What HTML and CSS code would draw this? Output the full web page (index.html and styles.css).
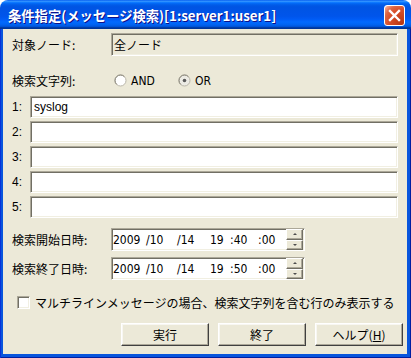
FILE: index.html
```html
<!DOCTYPE html>
<html lang="ja">
<head>
<meta charset="utf-8">
<title>条件指定</title>
<link rel="stylesheet" href="styles.css">
</head>
<body>
<div class="window">
  <div class="titlebar">
    <span class="title">条件指定(メッセージ検索)[1:server1:user1]</span>
    <span class="close">
      <svg width="19" height="19" viewBox="0 0 19 19"><path d="M5 5 L14 14 M14 5 L5 14" stroke="#fff" stroke-width="2.4" stroke-linecap="square"/></svg>
    </span>
  </div>
  <div class="frame">
    <div class="content">
      <div class="row row-node">
        <span class="label">対象ノード:</span>
        <div class="field readonly">全ノード</div>
      </div>
      <div class="row row-radio">
        <span class="label">検索文字列:</span>
        <div class="radios">
          <span class="radio">
            <svg width="13" height="13" viewBox="0 0 13 13"><circle cx="6.5" cy="6.5" r="5.5" fill="#fff" stroke="#b8b5a8" stroke-width="1"/><path d="M2.6 10.4 A5.5 5.5 0 0 1 10.4 2.6" fill="none" stroke="#8a877b" stroke-width="1"/></svg>
            <span class="rtext">AND</span>
          </span>
          <span class="radio">
            <svg width="13" height="13" viewBox="0 0 13 13"><circle cx="6.5" cy="6.5" r="5.5" fill="#ecebe4" stroke="#b8b5a8" stroke-width="1"/><path d="M2.6 10.4 A5.5 5.5 0 0 1 10.4 2.6" fill="none" stroke="#8a877b" stroke-width="1"/><circle cx="6.5" cy="6.5" r="1.8" fill="#5a5a5a"/></svg>
            <span class="rtext">OR</span>
          </span>
        </div>
      </div>
      <div class="strings">
        <span class="num">1:</span><div class="field">syslog</div>
        <span class="num">2:</span><div class="field"></div>
        <span class="num">3:</span><div class="field"></div>
        <span class="num">4:</span><div class="field"></div>
        <span class="num">5:</span><div class="field"></div>
      </div>
      <div class="row row-date first">
        <span class="label">検索開始日時:</span>
        <div class="datefield">
          <div class="dt"><span>2009</span><span>/10</span><span>/14</span><span>19</span><span>:40</span><span>:00</span></div>
          <div class="spin"><span class="sb up"></span><span class="sb down"></span></div>
        </div>
      </div>
      <div class="row row-date second">
        <span class="label">検索終了日時:</span>
        <div class="datefield">
          <div class="dt"><span>2009</span><span>/10</span><span>/14</span><span>19</span><span>:50</span><span>:00</span></div>
          <div class="spin"><span class="sb up"></span><span class="sb down"></span></div>
        </div>
      </div>
      <div class="check-row">
        <span class="checkbox"></span>
        <span class="ctext">マルチラインメッセージの場合、検索文字列を含む行のみ表示する</span>
      </div>
      <div class="buttons">
        <span class="btn">実行</span>
        <span class="btn">終了</span>
        <span class="btn">ヘルプ(<u>H</u>)</span>
      </div>
    </div>
  </div>
</div>
</body>
</html>
```
FILE: styles.css
```css
html, body {
  margin: 0;
  padding: 0;
}
body {
  width: 411px;
  height: 358px;
  overflow: hidden;
  background: #ffffff;
  font-family: "Noto Sans CJK JP", sans-serif;
  font-size: 12px;
  color: #000;
}
.window {
  width: 411px;
  height: 358px;
  display: flex;
  flex-direction: column;
  border-radius: 8px 8px 0 0;
  overflow: hidden;
}
.titlebar {
  height: 29px;
  flex: none;
  display: flex;
  align-items: center;
  justify-content: space-between;
  padding: 0 6px 0 8px;
  box-sizing: border-box;
  background: linear-gradient(to bottom, #0058ee 0%, #3593ff 4%, #288eff 6%, #127dff 8%, #036ffc 10%, #0262ee 14%, #0057e5 20%, #0054e3 24%, #0055eb 56%, #005bf5 66%, #026afe 76%, #0062ef 86%, #0052d6 92%, #0040ab 94%, #003092 100%);
}
.title {
  color: #fff;
  font-weight: bold;
  font-size: 13.3px;
  text-shadow: 1px 1px #0f1089;
  white-space: nowrap;
  margin-top: 1px;
}
.close {
  width: 21px;
  height: 21px;
  box-sizing: border-box;
  border: 1px solid #fff;
  border-radius: 3px;
  display: flex;
  align-items: center;
  justify-content: center;
  margin-top: 2px;
  background: radial-gradient(circle at 90% 90%, #b83712 0%, #d84f2a 55%, #df6744 75%, #f2a088 92%, #fff 100%);
}
.frame {
  flex: 1;
  display: flex;
  padding: 0 4px 4px 3px;
  background: #0855dd;
  box-shadow: inset 1px 0 #0831d9, inset -1px 0 #001ea0, inset 0 -1px #001ea0;
}
.content {
  flex: 1;
  background: #ece9d8;
  display: flex;
  flex-direction: column;
  padding: 4px 9px 0 9px;
}
.row {
  display: grid;
  grid-template-columns: 99px 1fr;
  align-items: center;
}
.row-node {
  height: 23px;
}
.row-radio {
  margin-top: 16px;
  height: 16px;
}
.label {
  white-space: nowrap;
}
.field {
  box-sizing: border-box;
  height: 22px;
  background: #fff;
  border: 1px solid;
  border-color: #aca899 #fff #fff #aca899;
  box-shadow: inset 1px 1px #716f64, inset -1px -1px #f1efe2;
  display: flex;
  align-items: center;
  padding-left: 3px;
  font-family: "Liberation Sans", sans-serif;
}
.field.readonly {
  height: 23px;
  background: #ece9d8;
  font-family: "Noto Sans CJK JP", sans-serif;
  padding-left: 2px;
}
.radios {
  display: flex;
  align-items: center;
  padding-left: 3px;
}
.radio {
  display: flex;
  align-items: center;
  gap: 4px;
  width: 64px;
}
.radio svg {
  display: block;
}
.rtext {
  font-family: "Liberation Sans Narrow", "DejaVu Sans Condensed", sans-serif;
  font-size: 12px;
}
.strings {
  margin-top: 8px;
  display: grid;
  grid-template-columns: 18px 1fr;
  row-gap: 3px;
  align-items: center;
}
.num {
  font-family: "Liberation Sans", sans-serif;
  font-size: 12px;
}
.row-date {
  height: 23px;
  grid-template-columns: 99px 194px;
}
.row-date.first {
  margin-top: 10px;
}
.row-date.second {
  margin-top: 6px;
}
.datefield {
  box-sizing: border-box;
  height: 23px;
  background: #fff;
  border: 1px solid;
  border-color: #aca899 #fff #fff #aca899;
  box-shadow: inset 1px 1px #716f64, inset -1px -1px #f1efe2;
  display: flex;
  align-items: stretch;
  padding: 0 1px 0 0;
}
.dt {
  flex: 1;
  display: grid;
  grid-template-columns: 33px 31px 33px 20px 28px auto;
  align-items: center;
  padding-left: 1px;
  font-family: "Liberation Sans Narrow", "DejaVu Sans Condensed", sans-serif;
  font-size: 12px;
  white-space: pre;
}
.spin {
  width: 17px;
  display: flex;
  flex-direction: column;
}
.sb {
  flex: 1;
  box-sizing: border-box;
  background: #ece9d8;
  border: 1px solid;
  border-color: #fff #716f64 #716f64 #fff;
  box-shadow: inset -1px -1px #aca899;
  display: flex;
  align-items: center;
  justify-content: center;
}
.sb::after {
  content: "";
  width: 0;
  height: 0;
  border-left: 2px solid transparent;
  border-right: 2px solid transparent;
}
.sb.up::after {
  border-bottom: 2px solid #4d4d4d;
}
.sb.down::after {
  border-top: 2px solid #4d4d4d;
}
.check-row {
  margin-top: 16px;
  display: flex;
  align-items: center;
  gap: 5px;
  padding-left: 5px;
  height: 13px;
}
.checkbox {
  width: 13px;
  height: 13px;
  box-sizing: border-box;
  background: #fff;
  border: 1px solid;
  border-color: #aca899 #fff #fff #aca899;
  box-shadow: inset 1px 1px #716f64, inset -1px -1px #f1efe2;
  flex: none;
}
.ctext {
  white-space: nowrap;
}
.buttons {
  margin-top: 14px;
  margin-right: -5px;
  display: flex;
  justify-content: flex-end;
  gap: 9px;
}
.btn {
  width: 88px;
  height: 23px;
  box-sizing: border-box;
  background: #ece9d8;
  border: 1px solid;
  border-color: #fff #404040 #404040 #fff;
  box-shadow: inset -1px -1px #aca899, inset 1px 1px #f8f7f2;
  display: flex;
  align-items: center;
  justify-content: center;
}
.btn u {
  text-decoration: underline;
}
```
